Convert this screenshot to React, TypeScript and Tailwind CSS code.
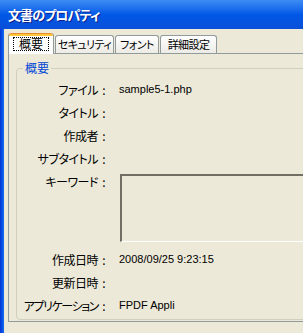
import React from 'react';

const rows1 = [
  { label: 'ファイル', value: 'sample5-1.php' },
  { label: 'タイトル', value: '' },
  { label: '作成者', value: '' },
  { label: 'サブタイトル', value: '' },
];

const rows2 = [
  { label: '作成日時', value: '2008/09/25 9:23:15' },
  { label: '更新日時', value: '' },
  { label: 'アプリケーション', value: 'FPDF Appli', tight: true },
];

function Row({ label, value, tight }: { label: string; value: string; tight?: boolean }) {
  return (
    <div className="flex h-[23px] items-center">
      <div className={tight ? 'w-[81px] shrink-0 whitespace-nowrap text-right tracking-[-1.4px]' : 'w-[81px] shrink-0 whitespace-nowrap text-right tracking-[-0.5px]'}>
        {label}
      </div>
      <div className="w-[12px] shrink-0 text-center">:</div>
      <div className="pl-[9px] font-['Liberation_Sans',sans-serif] text-[11px]">{value}</div>
    </div>
  );
}

function Tab({ label, width, active }: { label: string; width: number; active?: boolean }) {
  if (active) {
    return (
      <div className="relative z-10 -mb-[1px] flex h-[21px] w-[46px] flex-col rounded-t-[3px] border-x border-[#919b9c] bg-white">
        <div className="h-[3px] rounded-t-[3px] border-t border-[#e68b2c] bg-[#ffc83c]" />
        <div className="mx-[4px] mt-[1px] flex h-[14px] items-center justify-center border border-dotted border-black leading-none">
          {label}
        </div>
      </div>
    );
  }
  return (
    <div
      style={{ width }}
      className="flex h-[18px] items-center justify-center whitespace-nowrap rounded-t-[3px] border border-b-0 border-[#919b9c] bg-gradient-to-b from-white to-[#ecebe6] text-[11px] leading-none tracking-[-0.6px]"
    >
      {label}
    </div>
  );
}

export default function App() {
  return (
    <div className="flex h-[333px] w-[303px] flex-col overflow-hidden bg-[#ece9d8] font-['Noto_Sans_CJK_JP',sans-serif] text-[12px] text-black [font-feature-settings:'palt']">
      <div className="flex h-[29px] shrink-0 items-center bg-gradient-to-b from-[#3d8cf5] via-[#0058e6] to-[#0a4fd8] pl-[8px] text-[13px] font-bold tracking-[-0.9px] text-white [text-shadow:1px_1px_#0a1e8c]">
        文書のプロパティ
      </div>
      <div className="flex flex-1">
        <div className="w-[4px] shrink-0 bg-gradient-to-r from-[#0831d9] to-[#166aee]" />
        <div className="flex-1 pl-[4px] pt-[3px]">
          <div className="flex h-[21px] items-end gap-[1px]">
            <Tab label="概要" width={46} active />
            <Tab label="セキュリティ" width={59} />
            <Tab label="フォント" width={44} />
            <Tab label="詳細設定" width={57} />
          </div>
          <div className="h-[269px] w-[320px] border-y border-l border-[#919b9c] pl-[7px] pt-[14px]">
            <div className="relative h-[252px] w-[330px] rounded-[4px] border border-[#d0d0bf] pt-[9px]">
              <div className="absolute left-[6px] top-[-8px] bg-[#ece9d8] px-[2px] leading-[14px] text-[#0046d5]">
                概要
              </div>
              {rows1.map(r => (
                <Row key={r.label} label={r.label} value={r.value} />
              ))}
              <div className="flex h-[78px] pt-[4px]">
                <div className="w-[81px] shrink-0 whitespace-nowrap pt-[1px] text-right leading-[14px] tracking-[-0.5px]">キーワード</div>
                <div className="w-[12px] shrink-0 pt-[1px] text-center leading-[14px]">:</div>
                <div className="ml-[10px] h-[68px] flex-1 border-b border-l-2 border-r border-t-2 border-b-white border-l-[#716f64] border-r-white border-t-[#716f64]" />
              </div>
              {rows2.map(r => (
                <Row key={r.label} label={r.label} value={r.value} tight={r.tight} />
              ))}
            </div>
          </div>
        </div>
      </div>
    </div>
  );
}
